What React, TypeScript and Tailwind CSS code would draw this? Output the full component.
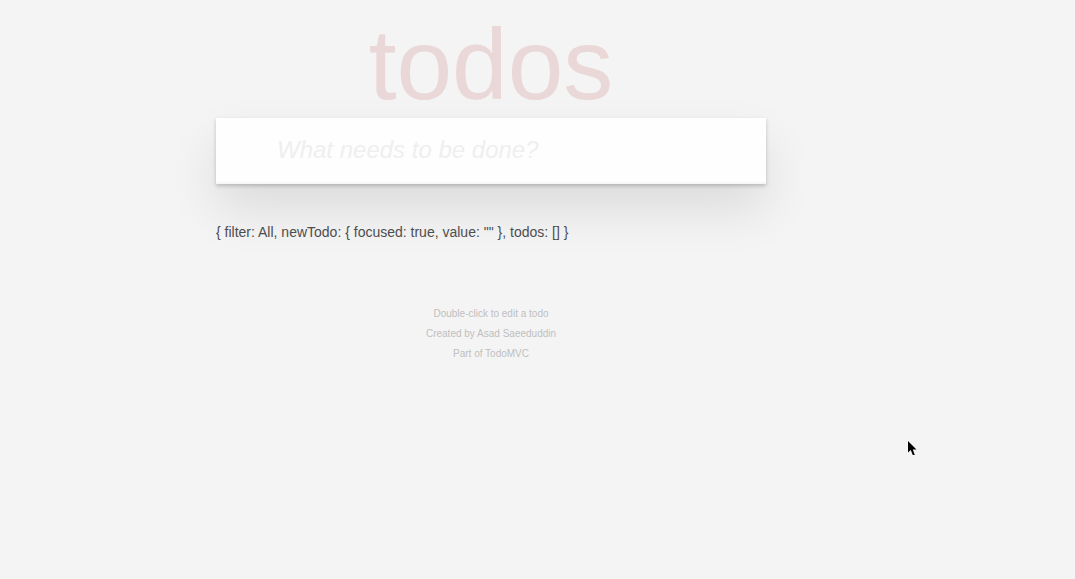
import { useState } from "react";

function Cursor() {
  return (
    <svg
      aria-hidden="true"
      className="pointer-events-none absolute top-[440px] left-[907px] h-[17px] w-[11px]"
      viewBox="0 0 11 17"
    >
      <path
        d="M1 1V12.5L3.7 10L5.8 15H7.8L5.8 9.5H9.5Z"
        fill="#000"
        stroke="#fff"
        strokeWidth="1"
        paintOrder="stroke"
      />
    </svg>
  );
}

export default function App() {
  const [value, setValue] = useState("");
  const [focused, setFocused] = useState(true);

  return (
    <div className="min-h-screen bg-[#f4f4f4] pr-[93px] font-['Liberation_Sans',Arial,sans-serif] text-[#4d4d4d]">
      <div className="mx-auto w-full max-w-[550px]">
        <header>
          <h1 className="pt-2.5 text-center text-[100px] leading-[108px] text-[#ead7d7]">todos</h1>
          <input
            aria-label="New todo"
            className="block h-[66px] w-full bg-[#fefefe] pr-4 pb-0.5 pl-[61px] text-2xl text-[#4d4d4d] shadow-[inset_0_-2px_1px_rgba(0,0,0,0.03),0_2px_4px_0_rgba(0,0,0,0.2),0_25px_50px_0_rgba(0,0,0,0.1)] outline-none placeholder:text-[#efefef] placeholder:italic"
            placeholder="What needs to be done?"
            value={value}
            onChange={(e) => setValue(e.target.value)}
            onFocus={() => setFocused(true)}
            onBlur={() => setFocused(false)}
          />
        </header>
        <p className="relative pt-9 text-sm leading-6">
          {`{ filter: All, newTodo: { focused: ${focused}, value: "${value}" }, todos: [] }`}
        </p>
        <footer className="mt-[60px] text-center text-[10px] leading-5 text-[#bfbfbf]">
          <p>Double-click to edit a todo</p>
          <p>
            Created by <a href="#author">Asad Saeeduddin</a>
          </p>
          <p>
            Part of <a href="#todomvc">TodoMVC</a>
          </p>
        </footer>
      </div>
      <Cursor />
    </div>
  );
}
